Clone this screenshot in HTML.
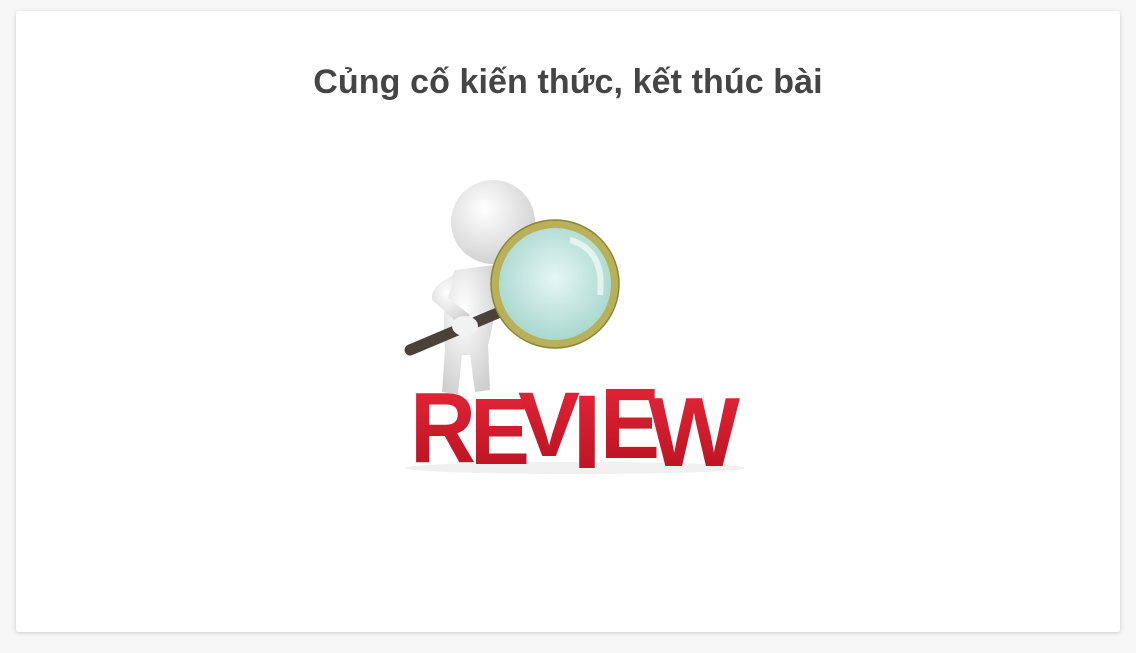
<!DOCTYPE html>
<html><head><meta charset="utf-8"><style>
html,body{margin:0;padding:0;background:#f7f7f7;width:1136px;height:653px;overflow:hidden}
.card{position:absolute;left:16px;top:11px;width:1104px;height:621px;background:#fff;border-radius:3px;box-shadow:0 1px 5px rgba(0,0,0,.18)}
h1{position:absolute;left:0;right:0;top:63px;margin:0;text-align:center;font:bold 34px "Liberation Sans","DejaVu Sans",sans-serif;color:#454545;letter-spacing:0.1px}
svg{position:absolute;left:0;top:0}
</style></head><body>
<div class="card"></div>
<h1>Củng cố kiến thức, kết thúc bài</h1>
<svg width="1136" height="653">
<defs>
<radialGradient id="w" cx="40%" cy="35%" r="70%"><stop offset="0" stop-color="#fff"/><stop offset="1" stop-color="#cfcfcf"/></radialGradient>
<radialGradient id="g" cx="50%" cy="45%" r="60%"><stop offset="0" stop-color="#e6f6f3"/><stop offset="1" stop-color="#9fd3c9"/></radialGradient>
<linearGradient id="r" x1="0" y1="0" x2="0" y2="1"><stop offset="0" stop-color="#e8283a"/><stop offset="1" stop-color="#b5101f"/></linearGradient>
</defs>
<ellipse cx="575" cy="468" rx="170" ry="6" fill="#f0f0f0"/>
<path d="M455 270 Q440 300 445 350 L442 392 L458 394 L462 355 L470 355 L475 392 L490 390 L488 345 Q500 300 495 265 Z" fill="url(#w)"/>
<path d="M455 275 Q430 285 432 300 L460 325 L470 315 L448 298 Z" fill="url(#w)"/>
<circle cx="493" cy="222" r="42" fill="url(#w)"/>
<line x1="410" y1="350" x2="500" y2="312" stroke="#4a4139" stroke-width="11" stroke-linecap="round"/>
<ellipse cx="465" cy="326" rx="13" ry="10" fill="#f2f2f2"/>
<circle cx="555" cy="284" r="60" fill="url(#g)" stroke="#b8b15a" stroke-width="8"/>
<circle cx="555" cy="284" r="64" fill="none" stroke="#8d8636" stroke-width="1.5"/>
<path d="M570 240 Q605 250 600 295" stroke="#fff" stroke-opacity=".6" stroke-width="6" fill="none"/>
<g font-family="Liberation Sans,sans-serif" font-weight="bold" fill="url(#r)">
<text x="410" y="462" font-size="100" textLength="66" lengthAdjust="spacingAndGlyphs">R</text>
<text x="470" y="464" font-size="95" textLength="60" lengthAdjust="spacingAndGlyphs">E</text>
<text x="518" y="456" font-size="92" textLength="62" lengthAdjust="spacingAndGlyphs">V</text>
<text x="572" y="468" font-size="105" textLength="30" lengthAdjust="spacingAndGlyphs">I</text>
<text x="600" y="458" font-size="100" textLength="60" lengthAdjust="spacingAndGlyphs">E</text>
<text x="648" y="466" font-size="98" textLength="92" lengthAdjust="spacingAndGlyphs">W</text>
</g>
</svg>
</body></html>
